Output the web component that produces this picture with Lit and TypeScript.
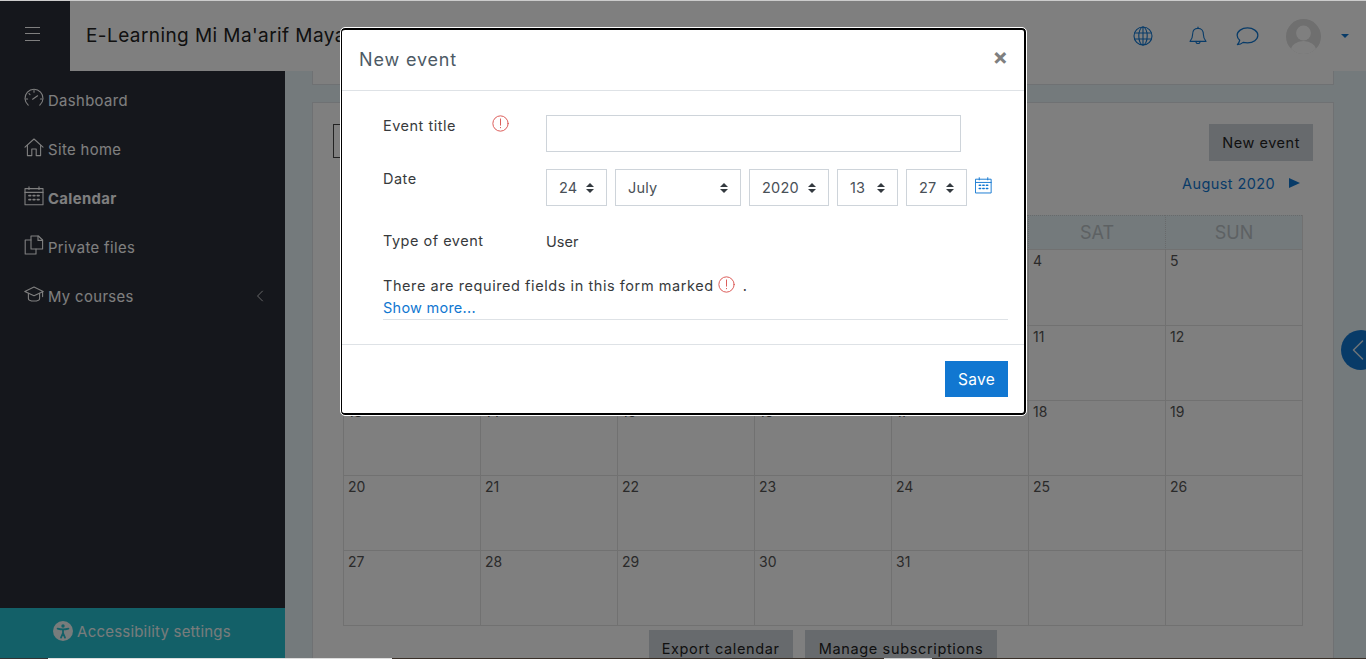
import {LitElement, css, html, svg} from 'lit';
import {customElement} from 'lit/decorators.js';

const icon = (body: unknown, size = 20, cls = '') => html`
  <svg class="ico ${cls}" width=${size} height=${size} viewBox="0 0 20 20" fill="none"
    stroke="currentColor" stroke-width="1.1" stroke-linecap="round" stroke-linejoin="round">${body}</svg>`;

const ICONS = {
  gauge: svg`<path d="M4.2 17.2A9 9 0 1 1 15.8 17.2"/><path d="M2 11h1.6M18 11h-1.6M10 2.6v1.6M5 5.6l1 1"/><path d="M8.6 11.2l5-3.4"/>`,
  home: svg`<path d="M1 10.2L10 2l9 8.2"/><path d="M3.4 8.4V18.6h4.4v-6.6h4.4v6.6h4.4V8.4"/>`,
  calendar: svg`<rect x="1" y="2.6" width="18" height="16.2"/><path d="M1 6.4h18M5 .8v2.6M15 .8v2.6"/><path stroke-width="1.8" d="M5 9.6h1.6M9.2 9.6h1.6M13.4 9.6h1.6M5 13.6h1.6M9.2 13.6h1.6M13.4 13.6h1.6"/>`,
  files: svg`<path d="M7 5H1.2v14H12v-5"/><path d="M7 14V1h7.4L18.6 5v9z"/><path d="M14 1v4.4h4.6"/>`,
  cap: svg`<path d="M10 3L.8 7.4l9.2 4.4 9.2-4.4z"/><path d="M4.4 9.4v5c0 1.6 2.6 2.6 5.6 2.6s5.6-1 5.6-2.6v-5"/><path d="M18.6 7.6v5"/>`,
  globe: svg`<circle cx="10" cy="10" r="9"/><ellipse cx="10" cy="10" rx="4.2" ry="9"/><path d="M10 1v18M1.6 7h16.8M1.6 13h16.8"/>`,
  bell: svg`<path d="M10 2.4c-3.6 0-5.4 2.8-5.4 6 0 4-1.2 5.4-2.6 7h16c-1.4-1.6-2.6-3-2.6-7 0-3.2-1.8-6-5.4-6z"/><path d="M10 1v1.4M8 15.4c0 2.8 4 2.8 4 0"/>`,
  comment: svg`<path d="M10 2.6c-5 0-9 2.8-9 6.4 0 1.8 1 3.2 2.2 4.3-.3 1.5-1.2 2.8-2 3.7 2 0 3.8-.8 5-1.9 1.2.3 2.5.4 3.8.4 5 0 9-2.9 9-6.5s-4-6.4-9-6.4z"/>`,
  warn: svg`<circle cx="10" cy="10" r="9"/><path d="M10 4.6v7.4M10 14.6v.4"/>`,
  chevron: svg`<path d="M13.5 3L6.5 10l7 7"/>`,
  access: svg`<circle cx="10" cy="10" r="10" fill="currentColor" stroke="none"/>
    <circle cx="10" cy="5" r="1.7" fill="#26c0d0" stroke="none"/>
    <path stroke="#26c0d0" stroke-width="1.8" d="M4.6 7.6c3.6 1.1 7.2 1.1 10.8 0M10 8.6v3.6M10 12l-2 4.6M10 12l2 4.6"/>`,
};

const NAV = [
  {label: 'Dashboard', icon: ICONS.gauge},
  {label: 'Site home', icon: ICONS.home},
  {label: 'Calendar', icon: ICONS.calendar, bold: true},
  {label: 'Private files', icon: ICONS.files},
  {label: 'My courses', icon: ICONS.cap, more: true},
];

const DAYS = ['MON', 'TUE', 'WED', 'THU', 'FRI', 'SAT', 'SUN'];
const CELLS = ['', '', 1, 2, 3, 4, 5, 6, 7, 8, 9, 10, 11, 12, 13, 14, 15, 16, 17, 18, 19, 20, 21, 22, 23, 24, 25, 26, 27, 28, 29, 30, 31, '', ''];
const SELECTS = [
  {value: '24', width: 61},
  {value: 'July', width: 126},
  {value: '2020', width: 80},
  {value: '13', width: 61},
  {value: '27', width: 61},
];

@customElement('app-root')
export class AppRoot extends LitElement {
  static styles = css`
    :host {
      display: block;
      height: 659px;
      overflow: hidden;
      font-family: Inter, 'Liberation Sans', sans-serif;
      font-size: 14.5px;
      color: #373a3c;
    }
    .page {
      position: relative;
      height: 659px;
      display: grid;
      grid-template-rows: 1px 70px 587px 1px;
      overflow: hidden;
      background: #e8f4f8;
    }
    .ico { display: block; flex: none; }
    .strip-top { background: #ccc; }
    .strip-bottom {
      background: linear-gradient(90deg, #333 0 48px, #ddd 48px 392px, #3a3028 392px 884px, #ccc 884px 932px, #3a3028 932px);
      position: relative;
      z-index: 3;
    }

    .topbar { display: flex; align-items: center; background: #fff; }
    .burger {
      width: 70px;
      height: 70px;
      background: #2a2e38;
      display: flex;
      align-items: center;
      padding: 0 0 4px 25px;
      box-sizing: border-box;
      flex: none;
    }
    .burger span { display: block; width: 15px; height: 14px; border-top: 1px solid #fff; border-bottom: 1px solid #fff; position: relative; box-sizing: border-box; }
    .burger span::after { content: ''; position: absolute; left: 0; right: 0; top: 5px; border-top: 1px solid #fff; }
    .brand { margin: -1px 0 0 16px; font-size: 19px; letter-spacing: .42px; color: #222; white-space: nowrap; }
    .top-icons { margin-left: auto; display: flex; align-items: center; color: #1177d1; }
    .top-icons .globe { margin-right: 35px; }
    .top-icons .bell { margin-right: 28px; }
    .top-icons .comment { margin-right: 27px; }
    .avatar { width: 35px; height: 35px; margin-right: 20px; }
    .caret { width: 0; height: 0; border: 4px solid transparent; border-top-color: #1177d1; border-bottom: 0; margin-right: 17px; }

    .body { display: grid; grid-template-columns: 285px 1fr; min-height: 0; }
    .sidebar { background: #2a2e38; display: flex; flex-direction: column; color: #fff; }
    .nav { flex: 1; padding-top: 5px; }
    .nav-item { height: 49px; display: flex; align-items: center; padding-left: 24px; gap: 4px; position: relative; font-size: 14.8px; letter-spacing: .4px; }
    .nav-item .ico { margin-top: -6px; }
    .nav-item.bold { font-weight: 700; }
    .nav-item .more { position: absolute; left: 253px; top: 17px; margin: 0; }
    .access { height: 50px; background: #26c0d0; display: flex; align-items: center; justify-content: center; gap: 4px; padding: 0 1px 4px 0; box-sizing: border-box; font-size: 15px; letter-spacing: .2px; color: #f0f8f8; }

    .main { padding: 0 32px 0 27px; overflow: hidden; display: flex; flex-direction: column; gap: 17px; }
    .card { background: #fff; border: 1px solid #dfe3e6; box-sizing: border-box; }
    .card.stub { height: 14px; border-top: 0; flex: none; }
    .card.cal { flex: 1; padding: 21px 20px 0; margin-bottom: -30px; }
    .toolbar { display: flex; justify-content: space-between; align-items: flex-start; }
    .month-select { width: 120px; height: 34px; box-sizing: border-box; border: 1px solid #444; }
    .btn { background: #ced4da; color: #222; padding: 0 13px; height: 37px; display: flex; align-items: center; letter-spacing: .65px; white-space: nowrap; }
    .toolbar .btn { letter-spacing: .55px; }
    .month-nav { display: flex; justify-content: flex-end; align-items: center; gap: 14px; margin: 11px 13px 0 0; height: 22px; color: #1177d1; letter-spacing: .4px; }
    .month-nav i { width: 0; height: 0; border: 5px solid transparent; border-left: 11px solid #1177d1; border-right: 0; }
    .grid { margin: 21px 10px 0; display: grid; grid-template-columns: repeat(7, 1fr); grid-template-rows: 35px repeat(5, 75px); border-right: 1px solid #e2e2e2; border-bottom: 1px solid #e2e2e2; }
    .head { background: #e8f4f8; color: #bbc3c7; font-size: 18px; display: flex; align-items: center; justify-content: center; border-left: 1px dotted #d0d4d6; border-top: 1px dotted #d0d4d6; border-bottom: 1px solid #e2e2e2; }
    .cell { border-left: 1px solid #e2e2e2; border-top: 1px solid #e2e2e2; padding: 2px 4px; font-size: 14px; color: #555; }
    .cell:nth-child(-n+14) { border-top: 0; }
    .actions { display: flex; justify-content: center; gap: 12px; margin-top: 4px; }
    .actions .btn:last-child { padding: 0 14px; }

    .backdrop { position: absolute; left: 0; right: 0; top: 1px; bottom: 1px; background: rgba(0,0,0,.5); }
    .modal {
      position: absolute;
      left: 341px;
      top: 28px;
      width: 685px;
      height: 387px;
      box-sizing: border-box;
      background: #fff;
      border: solid #000;
      border-width: 2px 2px 2px 1px;
      border-radius: 4px;
      outline: 1px solid #fff;
      display: flex;
      flex-direction: column;
    }
    .modal-head { height: 60px; flex: none; display: flex; align-items: center; justify-content: space-between; padding: 0 16px 0 17px; box-sizing: content-box; border-bottom: 1px solid #dee2e6; }
    .modal-title { font-size: 18px; letter-spacing: .85px; color: #4d5a65; margin-top: -2px; }
    .close { font-size: 23px; font-weight: 700; color: #7f7f7f; margin-top: -6px; line-height: 1; }
    .form { flex: 1; padding: 24px 16px 0 41px; }
    .row { display: grid; grid-template-columns: 109px 54px 1fr; }
    .row.first { height: 37px; margin-bottom: 17px; }
    .row.date { height: 37px; margin-bottom: 24px; }
    .row.type { height: 22px; margin-bottom: 22px; align-items: center; }
    .label { letter-spacing: .5px; padding-top: 2px; line-height: 18px; }
    .row.date .label { padding-top: 1px; }
    .row.type .label, .row.type .val { padding: 0; }
    .warn { color: #d9534f; }
    .input { width: 415px; height: 37px; box-sizing: border-box; border: 1px solid #ced4da; }
    .selects { display: flex; gap: 8px; align-items: center; grid-column: 3; }
    .select { height: 37px; box-sizing: border-box; border: 1px solid #ced4da; display: flex; align-items: center; justify-content: space-between; padding: 0 12px 0 12px; color: #495057; letter-spacing: .2px; }
    .updown { display: flex; flex-direction: column; gap: 2px; }
    .updown i { display: block; width: 0; height: 0; border: 4px solid transparent; }
    .updown i:first-child { border-bottom: 4px solid #343a40; border-top: 0; }
    .updown i:last-child { border-top: 4px solid #343a40; border-bottom: 0; }
    .date-ico { color: #1177d1; margin-top: -4px; }
    .note { display: flex; align-items: center; height: 23px; letter-spacing: .57px; white-space: nowrap; }
    .note .warn { margin: 0 8px 3px 4px; }
    .show { height: 22px; line-height: 22px; border-bottom: 1px solid #dee2e6; color: #1177d1; letter-spacing: .25px; }
    .modal-foot { height: 69px; flex: none; box-sizing: border-box; border-top: 1px solid #dee2e6; padding: 16px 16px 0; display: flex; justify-content: flex-end; }
    .save { width: 63px; height: 36px; background: #1177d1; color: #fff; font-size: 15.5px; letter-spacing: .3px; display: flex; align-items: center; justify-content: center; }
    .drawer { position: absolute; right: -15px; top: 330px; width: 40px; height: 40px; border-radius: 50%; background: #1177d1; color: #dce6ee; display: flex; align-items: center; padding-left: 4px; box-sizing: border-box; }
  `;

  private renderNav() {
    return NAV.map(
      (n) => html`
        <div class="nav-item ${n.bold ? 'bold' : ''}">
          ${icon(n.icon)}<span>${n.label}</span>
          ${n.more ? icon(ICONS.chevron, 14, 'more') : ''}
        </div>`
    );
  }

  private renderCalendar() {
    return html`
      <div class="grid">
        ${DAYS.map((d) => html`<div class="head">${d}</div>`)}
        ${CELLS.map((c) => html`<div class="cell">${c}</div>`)}
      </div>`;
  }

  private renderModal() {
    return html`
      <div class="modal">
        <div class="modal-head">
          <span class="modal-title">New event</span>
          <span class="close">×</span>
        </div>
        <div class="form">
          <div class="row first">
            <span class="label">Event title</span>
            ${icon(ICONS.warn, 17, 'warn')}
            <div class="input"></div>
          </div>
          <div class="row date">
            <span class="label">Date</span>
            <div class="selects">
              ${SELECTS.map(
                (s) => html`
                  <div class="select" style="width:${s.width}px">
                    <span>${s.value}</span>
                    <span class="updown"><i></i><i></i></span>
                  </div>`
              )}
              ${icon(ICONS.calendar, 17, 'date-ico')}
            </div>
          </div>
          <div class="row type">
            <span class="label">Type of event</span>
            <span></span>
            <span class="val">User</span>
          </div>
          <div class="note">
            There are required fields in this form marked
            ${icon(ICONS.warn, 17, 'warn')}<span>.</span>
          </div>
          <div class="show">Show more...</div>
        </div>
        <div class="modal-foot"><div class="save">Save</div></div>
      </div>`;
  }

  render() {
    return html`
      <div class="page">
        <div class="strip-top"></div>
        <header class="topbar">
          <div class="burger"><span></span></div>
          <div class="brand">E-Learning Mi Ma'arif Mayak</div>
          <div class="top-icons">
            ${icon(ICONS.globe, 20, 'globe')}
            ${icon(ICONS.bell, 20, 'bell')}
            ${icon(ICONS.comment, 23, 'comment')}
            <svg class="avatar" viewBox="0 0 35 35">
              <defs><clipPath id="av"><circle cx="17.5" cy="17.5" r="17.5"/></clipPath></defs>
              <g clip-path="url(#av)">
                <rect width="35" height="35" fill="#dedede"/>
                <circle cx="17.5" cy="14" r="7.4" fill="#fff"/>
                <ellipse cx="17.5" cy="31" rx="12.5" ry="9" fill="#fff"/>
              </g>
            </svg>
            <div class="caret"></div>
          </div>
        </header>
        <div class="body">
          <aside class="sidebar">
            <nav class="nav">${this.renderNav()}</nav>
            <div class="access">${icon(ICONS.access)}<span>Accessibility settings</span></div>
          </aside>
          <main class="main">
            <div class="card stub"></div>
            <section class="card cal">
              <div class="toolbar">
                <div class="month-select"></div>
                <div class="btn">New event</div>
              </div>
              <div class="month-nav"><span>August 2020</span><i></i></div>
              ${this.renderCalendar()}
              <div class="actions">
                <div class="btn">Export calendar</div>
                <div class="btn">Manage subscriptions</div>
              </div>
            </section>
          </main>
        </div>
        <div class="strip-bottom"></div>
        <div class="drawer">${icon(ICONS.chevron, 26)}</div>
        <div class="backdrop"></div>
        ${this.renderModal()}
      </div>`;
  }
}
